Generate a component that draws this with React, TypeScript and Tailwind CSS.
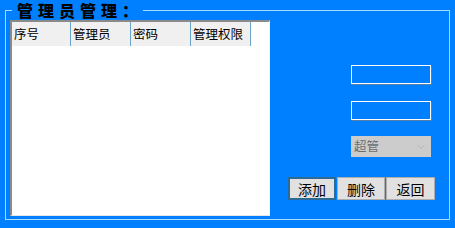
import { ChevronDown } from 'lucide-react';

const columns = [
  { label: '序号', w: 'w-[59px]' },
  { label: '管理员', w: 'w-[60px]' },
  { label: '密码', w: 'w-[60px]' },
  { label: '管理权限', w: 'w-[60px]' },
];

const App = () => {
  return (
    <div
      className="w-[455px] h-[228px] bg-[#0080ff] overflow-hidden pl-[5px] pt-[1px]"
      style={{ fontFamily: '"Noto Sans CJK SC", "Noto Sans", sans-serif' }}
    >
      <fieldset className="w-[445px] h-[219px] border border-[#a6dcff] pl-[4px] pt-[1px] m-0">
        <legend className="ml-[2px] pl-[5px] pr-0 text-[16px] leading-[18px] font-black tracking-[5px] text-black">
          管理员管理：
        </legend>

        <div className="flex">
          {/* list view */}
          <div className="w-[260px] h-[196px] bg-white border-t-2 border-l-2 border-r border-b border-t-[#8a8a8a] border-l-[#8a8a8a] border-r-[#f4f4f4] border-b-[#e6e6e6]">
            <div className="flex h-[24px]">
              {columns.map((c) => (
                <div
                  key={c.label}
                  className={`${c.w} h-full bg-[#f0f0f0] border-r border-[#6aa3cc] pl-[2px] text-[12.5px] leading-[24px] text-black`}
                >
                  {c.label}
                </div>
              ))}
            </div>
          </div>

          {/* controls */}
          <div className="flex flex-col pl-[18px]">
            <div className="ml-[63px] mt-[45px] w-[80px] h-[19px] border border-white shadow-[1px_1px_0_#5a7fa6]" />
            <div className="ml-[63px] mt-[17px] w-[80px] h-[19px] border border-white shadow-[1px_1px_0_#5a7fa6]" />
            <div className="ml-[63px] mt-[16px] w-[80px] h-[21px] bg-[#cccccc] flex items-center justify-between pl-[3px] pr-[4px] text-[12.5px] text-[#6d6d6d]">
              <span>超管</span>
              <ChevronDown size={12} strokeWidth={1.5} className="text-[#a8a8a8]" />
            </div>
            <div className="mt-[20px] flex gap-[1px]">
              <button className="w-[48px] h-[23px] bg-[#e1e1e1] border-2 border-[#2d6a94] text-[14px] leading-none text-black">
                添加
              </button>
              <button className="w-[48px] h-[23px] bg-[#e1e1e1] border border-[#adadad] text-[14px] leading-none text-black">
                删除
              </button>
              <button className="w-[49px] h-[23px] bg-[#e1e1e1] border border-[#adadad] text-[14px] leading-none text-black">
                返回
              </button>
            </div>
          </div>
        </div>
      </fieldset>
    </div>
  );
};

export default App;
